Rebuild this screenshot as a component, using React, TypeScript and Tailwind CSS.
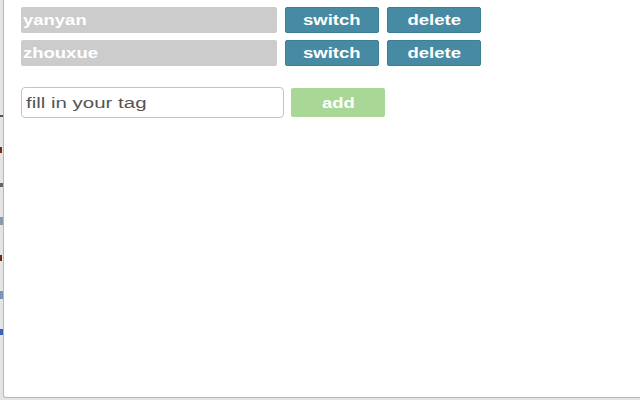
import React from "react";

const names = ["yanyan", "zhouxue"];

function Btn({ label }: { label: string }) {
  return (
    <button className="flex h-[26px] w-[94px] items-center justify-center rounded-[2px] border border-[#3b7f97] bg-[#468ba3] text-white">
      <span className="inline-block origin-center scale-x-[1.32] text-[14px] font-bold leading-none">
        {label}
      </span>
    </button>
  );
}

export default function App() {
  return (
    <div
      className="flex h-[400px] w-[640px] bg-[#e4e4e4]"
      style={{ fontFamily: '"Liberation Sans", Arial, sans-serif' }}
    >
      <div className="flex w-[3px] flex-col items-start gap-[30px] pt-[115px]">
        <div className="h-[2px] w-[3px] bg-[#555]" />
        <div className="h-[6px] w-[2px] bg-[#7a2a1a]" />
        <div className="h-[4px] w-[3px] bg-[#666]" />
        <div className="h-[8px] w-[3px] bg-[#8899aa]" />
        <div className="h-[6px] w-[2px] bg-[#6a2a1a]" />
        <div className="h-[8px] w-[3px] bg-[#7d95b5]" />
        <div className="h-[6px] w-[3px] bg-[#3a63b8]" />
      </div>
      <div className="flex h-[398px] flex-1 flex-col gap-[7px] rounded-bl-[3px] border-b border-l border-[#b8b8b8] bg-white pl-[17px] pt-[7px]">
        {names.map((n) => (
          <div key={n} className="flex gap-[8px]">
            <div className="flex h-[26px] w-[256px] items-center rounded-[2px] bg-[#cccccc] pl-[2px] text-white">
              <span className="inline-block origin-left scale-x-[1.32] text-[14px] font-bold leading-none">
                {n}
              </span>
            </div>
            <Btn label="switch" />
            <Btn label="delete" />
          </div>
        ))}
        <div className="mt-[14px] flex items-center gap-[7px]">
          <div className="flex h-[31px] w-[263px] items-center overflow-hidden rounded-[4px] border border-[#c4c4c4] bg-white pl-[4px]">
            <input
              className="w-[190px] origin-left scale-x-[1.32] bg-transparent text-[15.5px] text-[#444] outline-none placeholder:text-[#555]"
              placeholder="fill in your tag"
            />
          </div>
          <button className="flex h-[29px] w-[94px] items-center justify-center rounded-[2px] bg-[#a8d796] text-white">
            <span className="inline-block origin-center scale-x-[1.32] text-[14px] font-bold leading-none">
              add
            </span>
          </button>
        </div>
      </div>
    </div>
  );
}
